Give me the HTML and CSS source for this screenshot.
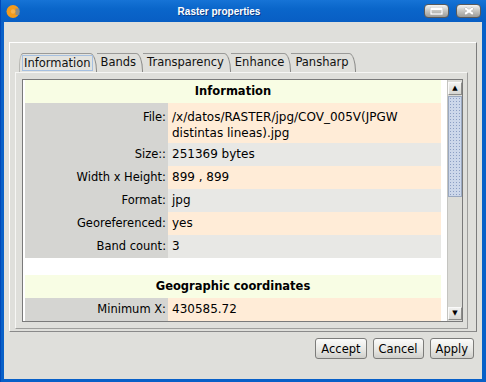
FILE: index.html
```html
<!DOCTYPE html>
<html lang="en">
<head>
  <meta charset="UTF-8">
  <title>Raster properties</title>
  <link rel="stylesheet" href="styles.css">
</head>
<body>
  <div class="window">
    <div class="titlebar">
      <svg class="app-icon" width="15" height="15" viewBox="0 0 15 15">
        <circle cx="7" cy="7.5" r="6.5" fill="#f39b1c"/>
        <path d="M9.5 4.5 L13.5 4.5 L13.5 11 L9.5 11 Z" fill="#6c88a8" opacity="0.75"/>
        <circle cx="7" cy="7.5" r="2.2" fill="#f7b24a"/>
      </svg>
      <div class="title">Raster properties</div>
      <div class="wbtn">
        <svg width="13" height="8" viewBox="0 0 13 8"><rect x="1" y="1" width="11" height="6" fill="none" stroke="#fff" stroke-width="1.6"/><rect x="1" y="1" width="11" height="2" fill="#fff"/></svg>
      </div>
      <div class="wbtn">
        <svg width="12" height="8" viewBox="0 0 12 8"><path d="M2 1 L10 7 M10 1 L2 7" stroke="#fff" stroke-width="2.4"/></svg>
      </div>
    </div>

    <div class="content">
      <div class="etched">
        <div class="tabs">
          <div class="tab first selected"><span class="focus">Information</span></div>
          <div class="tab">Bands</div>
          <div class="tab">Transparency</div>
          <div class="tab">Enhance</div>
          <div class="tab">Pansharp</div>
        </div>
        <div class="tabpanel">
          <div class="scrollpane">
            <div class="table">
              <div class="row head">Information</div>
              <div class="row peach tall"><div class="key">File:</div><div class="val">/x/datos/RASTER/jpg/COV_005V(JPGW<br>distintas lineas).jpg</div></div>
              <div class="row gray"><div class="key">Size::</div><div class="val">251369 bytes</div></div>
              <div class="row peach"><div class="key">Width x Height:</div><div class="val">899 , 899</div></div>
              <div class="row gray"><div class="key">Format:</div><div class="val">jpg</div></div>
              <div class="row peach"><div class="key">Georeferenced:</div><div class="val">yes</div></div>
              <div class="row gray"><div class="key">Band count:</div><div class="val">3</div></div>
              <div class="spacer"></div>
              <div class="row head">Geographic coordinates</div>
              <div class="row peach"><div class="key">Minimum X:</div><div class="val">430585.72</div></div>
            </div>
            <div class="vscroll">
              <div class="arrow">&#9650;</div>
              <div class="thumb"></div>
              <div class="track"></div>
              <div class="arrow">&#9660;</div>
            </div>
          </div>
        </div>
      </div>
      <div class="actions">
        <button>Accept</button>
        <button>Cancel</button>
        <button>Apply</button>
      </div>
    </div>
  </div>
</body>
</html>
```

FILE: styles.css
```css
body { margin: 0; font-family: "DejaVu Sans", sans-serif; font-size: 11.5px; color: #000; }

.window {
  width: 486px; height: 382px; box-sizing: border-box;
  background: #0860c8; display: flex; flex-direction: column;
  border-left: 1px solid #0048b8;
}

.titlebar {
  height: 22px; display: flex; align-items: center;
  padding: 0 5px 0 5px;
  background: linear-gradient(#1673d6, #0a66ca 40%, #085ec4);
}
.app-icon { flex: none; }
.title {
  flex: 1; text-align: center; color: #fff;
  font: bold 10px "Liberation Sans", sans-serif;
  text-shadow: 1px 1px 0 #0a3c88;
}
.wbtn {
  width: 25px; height: 14px; box-sizing: border-box; margin-left: 7px;
  border: 1px solid #5a5a5a; border-radius: 4px;
  background: linear-gradient(#f4f4f2, #c8c8c4 45%, #9c9c98);
  display: flex; align-items: center; justify-content: center;
}
.wbtn svg { filter: drop-shadow(0 0 0.6px #555); }

.content {
  flex: 1; margin: 0 4px 3px 3px; background: #dfdfdb;
  display: flex; flex-direction: column;
}

.etched {
  margin: 20px 5px 0 5px; height: 290px; box-sizing: border-box;
  border: 1px solid #fff; border-right-color: #7c7c7c; border-bottom-color: #8a8a8a;
  padding: 10px 8px 3px 5px; display: flex; flex-direction: column;
}

.tabs { height: 19px; display: flex; padding-left: 4px; }
.tab {
  height: 19px; box-sizing: border-box; line-height: 17px;
  border-top: 1px solid #9a9a98; border-right: 1px solid #8a8a88;
  border-top-right-radius: 7px 18px;
  padding: 0 6px 0 4px; color: #111;
}
.tab.first { border-left: 1px solid #b8b8b4; border-top-left-radius: 4px 12px; }
.tab.selected { background: #e3e3df; padding-left: 2px; padding-right: 3px; }
.focus { border: 1px solid #a6c0e0; padding: 0 1px; line-height: 14px; display: inline-block; margin-top: 1px; }

.tabpanel {
  flex: 1; box-sizing: border-box;
  border: 1px solid #f6f6f4; border-right-color: #9e9e9c; border-bottom-color: #9e9e9c;
  padding: 6px 4px 6px 6px; display: flex;
}

.scrollpane {
  flex: 1; display: flex; border: 1px solid #7a7a7a; background: #fff; overflow: hidden;
}
.table { flex: 1; padding: 0 6px 0 2px; overflow: hidden; }

.row { display: grid; grid-template-columns: 143px 1fr; height: 23px; line-height: 23px; }
.row.tall { height: 40px; line-height: 16px; }
.row.tall .key, .row.tall .val { padding-top: 6px; }
.key { background: #d5d5d2; text-align: right; padding-right: 2px; }
.val { padding-left: 4px; white-space: nowrap; font-size: 12px; }
.peach .val { background: #ffecd7; }
.gray .val { background: #e8e8e5; }
.row.head { display: block; background: #f8fde4; text-align: center; font-weight: bold; }
.spacer { height: 17px; }

.vscroll {
  width: 15px; flex: none; background: #dcdcd8; border-left: 1px solid #c4c4c0;
  display: flex; flex-direction: column; padding: 2px 0 1px 0; box-sizing: border-box;
}
.arrow {
  height: 13px; box-sizing: border-box; flex: none;
  border: 1px solid #8c8c8a; border-top-color: #fafafa; border-left-color: #fafafa;
  background: linear-gradient(#f2f2f0, #d6d6d2);
  font-size: 7px; line-height: 11px; text-align: center; color: #000;
}
.thumb {
  height: 101px; margin-top: 1px; flex: none;
  border: 1px solid #9aa8c0; box-sizing: border-box;
  background-color: #ccd7ea;
  background-image: radial-gradient(circle, #8c9fc4 0.6px, transparent 0.9px);
  background-size: 3px 3px;
}
.track { flex: 1; }

.actions { display: flex; justify-content: flex-end; gap: 6px; margin: 6px 8px 0 0; }
.actions button {
  height: 21px; padding: 0 5px; font: 11.5px "DejaVu Sans", sans-serif; color: #000;
  border: 1px solid #7c7c7a; border-radius: 3px;
  background: linear-gradient(#fbfbfa, #e6e6e2 60%, #cfcfcb);
}
```
